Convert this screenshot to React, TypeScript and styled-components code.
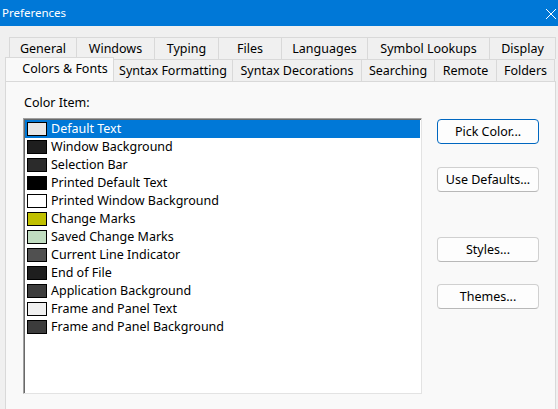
import React, { useState } from 'react';
import styled, { createGlobalStyle } from 'styled-components';

interface ColorItem {
  name: string;
  swatch: string;
}

const COLOR_ITEMS: ColorItem[] = [
  { name: 'Default Text', swatch: '#e6e6e6' },
  { name: 'Window Background', swatch: '#1e1e1e' },
  { name: 'Selection Bar', swatch: '#2b2b2b' },
  { name: 'Printed Default Text', swatch: '#000000' },
  { name: 'Printed Window Background', swatch: '#ffffff' },
  { name: 'Change Marks', swatch: '#c0c000' },
  { name: 'Saved Change Marks', swatch: '#c0dcc0' },
  { name: 'Current Line Indicator', swatch: '#505050' },
  { name: 'End of File', swatch: '#1e1e1e' },
  { name: 'Application Background', swatch: '#3c3c3c' },
  { name: 'Frame and Panel Text', swatch: '#f0f0f0' },
  { name: 'Frame and Panel Background', swatch: '#3c3c3c' },
];

// tab widths include the shared 1px border with the neighbour
const TOP_TABS: [string, number][] = [
  ['General', 68],
  ['Windows', 79],
  ['Typing', 65],
  ['Files', 64],
  ['Languages', 87],
  ['Symbol Lookups', 123],
  ['Display', 67],
];

const BOTTOM_TABS: [string, number][] = [
  ['Colors & Fonts', 109],
  ['Syntax Formatting', 120],
  ['Syntax Decorations', 130],
  ['Searching', 74],
  ['Remote', 63],
  ['Folders', 59],
];

function App(): JSX.Element {
  const [selected, setSelected] = useState<number>(0);
  const [activeTab, setActiveTab] = useState<string>('Colors & Fonts');

  return (
    <>
      <GlobalStyle />
      <Window>
        <TitleBar>
          <Title>Preferences</Title>
          <CloseIcon width="12" height="12" viewBox="0 0 12 12">
            <path d="M1 1 L11 11 M11 1 L1 11" stroke="#ffffff" strokeWidth="1" fill="none" />
          </CloseIcon>
        </TitleBar>
        <Body>
          <TabRow $indent={4}>
            {TOP_TABS.map(([label, width]) => (
              <Tab key={label} $w={width} onClick={() => setActiveTab(label)}>
                {label}
              </Tab>
            ))}
          </TabRow>
          <TabRow $indent={0}>
            {BOTTOM_TABS.map(([label, width]) =>
              label === activeTab ? (
                <ActiveTab key={label} $w={width}>
                  {label}
                </ActiveTab>
              ) : (
                <Tab key={label} $w={width} onClick={() => setActiveTab(label)}>
                  {label}
                </Tab>
              ),
            )}
          </TabRow>
          <Panel>
            <ListColumn>
              <FieldLabel>Color Item:</FieldLabel>
              <ListBox>
                {COLOR_ITEMS.map((item, index) => (
                  <ListRow
                    key={item.name}
                    $selected={index === selected}
                    onClick={() => setSelected(index)}
                  >
                    <Swatch $color={item.swatch} />
                    {item.name}
                  </ListRow>
                ))}
              </ListBox>
            </ListColumn>
            <ButtonColumn>
              <PushButton $default $gap={0}>Pick Color...</PushButton>
              <PushButton $gap={23}>Use Defaults...</PushButton>
              <PushButton $gap={45}>Styles...</PushButton>
              <PushButton $gap={22}>Themes...</PushButton>
            </ButtonColumn>
          </Panel>
        </Body>
      </Window>
    </>
  );
}

export default App;

const GlobalStyle = createGlobalStyle`
  html, body {
    margin: 0;
    padding: 0;
    background: #f0f0f0;
    overflow: hidden;
  }
  * {
    box-sizing: border-box;
  }
`;

const Window = styled.div`
  display: flex;
  flex-direction: column;
  width: 558px;
  height: 409px;
  background: #f0f0f0;
  font-family: 'Noto Sans', 'Liberation Sans', sans-serif;
  font-size: 12.5px;
  color: #000000;
  overflow: hidden;
`;

const TitleBar = styled.div`
  display: flex;
  align-items: center;
  justify-content: space-between;
  height: 26px;
  padding: 0 1px 0 2px;
  background: #0078d7;
  color: #ffffff;
  flex-shrink: 0;
`;

const Title = styled.span`
  font-size: 11.5px;
  line-height: 26px;
`;

const CloseIcon = styled.svg`
  margin-top: 1px;
`;

const Body = styled.div`
  display: flex;
  flex-direction: column;
  flex: 1;
  padding: 11px 2px 0 5px;
`;

const TabRow = styled.div<{ $indent: number }>`
  display: flex;
  padding-left: ${(p) => p.$indent}px;
`;

const Tab = styled.div<{ $w: number }>`
  display: flex;
  align-items: center;
  justify-content: center;
  width: ${(p) => p.$w}px;
  height: 22px;
  margin-left: -1px;
  border: 1px solid #d9d9d9;
  border-bottom: none;
  background: #f0f0f0;
  white-space: nowrap;
  cursor: default;

  &:first-child {
    margin-left: 0;
  }
`;

const ActiveTab = styled(Tab)`
  position: relative;
  z-index: 1;
  height: 24px;
  margin-top: -2px;
  margin-bottom: -1px;
  padding: 0 0 2px 11px;
  background: #f9f9f9;
  border-color: #d9d9d9;
`;

const Panel = styled.div`
  display: flex;
  flex: 1;
  gap: 15px;
  padding: 12px 0 0 17px;
  border: 1px solid #d9d9d9;
  border-bottom: none;
  background: #f9f9f9;
`;

const ListColumn = styled.div`
  display: flex;
  flex-direction: column;
`;

const FieldLabel = styled.div`
  height: 18px;
  line-height: 18px;
  margin-bottom: 6px;
  padding-left: 1px;
`;

// sunken list: grey outer edge, dark inner edge on top/left
const ListBox = styled.div`
  width: 399px;
  height: 276px;
  padding: 1px;
  background: #ffffff;
  border-top: 1px solid #a0a0a0;
  border-left: 1px solid #a0a0a0;
  border-right: 1px solid #e3e3e3;
  border-bottom: 1px solid #e3e3e3;
  box-shadow: inset 1px 1px 0 #696969;
`;

const ListRow = styled.div<{ $selected: boolean }>`
  display: flex;
  align-items: center;
  gap: 4px;
  height: 18px;
  padding: 0 0 2px 2px;
  background: ${(p) => (p.$selected ? '#0078d7' : 'transparent')};
  color: ${(p) => (p.$selected ? '#ffffff' : '#000000')};
  white-space: nowrap;
  cursor: default;
`;

const Swatch = styled.span<{ $color: string }>`
  width: 20px;
  height: 14px;
  flex-shrink: 0;
  margin-top: 2px;
  border: 1px solid #000000;
  background: ${(p) => p.$color};
`;

const ButtonColumn = styled.div`
  display: flex;
  flex-direction: column;
  padding-top: 25px;
`;

const PushButton = styled.button<{ $default?: boolean; $gap: number }>`
  width: 102px;
  height: 25px;
  margin-top: ${(p) => p.$gap}px;
  padding: 0;
  border: 1px solid ${(p) => (p.$default ? '#0067c0' : '#d0d0d0')};
  border-bottom-color: ${(p) => (p.$default ? '#0067c0' : '#b8b8b8')};
  border-radius: 4px;
  background: #fdfdfd;
  font-family: inherit;
  font-size: 12.5px;
  color: #000000;
`;
